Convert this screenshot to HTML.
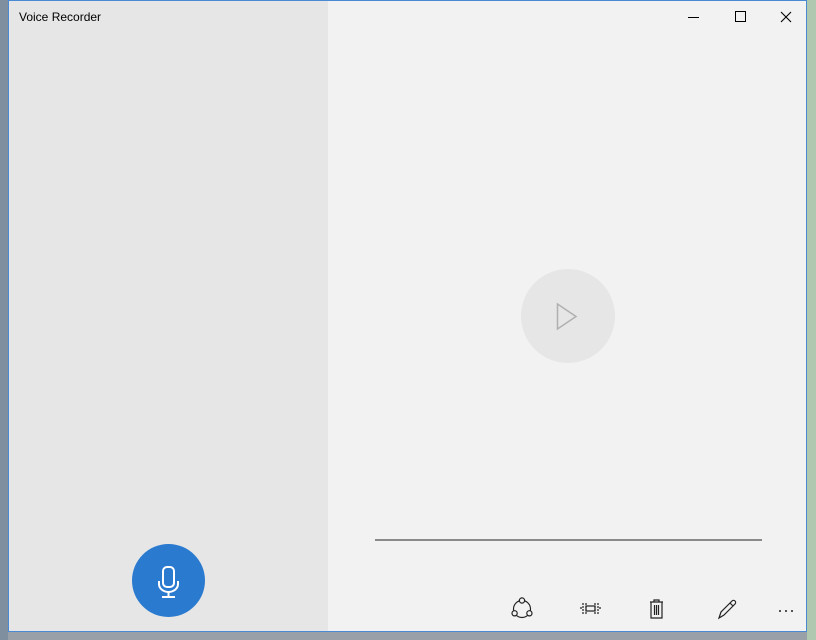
<!DOCTYPE html>
<html><head><meta charset="utf-8"><style>
html,body{margin:0;padding:0;width:816px;height:640px;overflow:hidden;background:#9aa0a8;font-family:"Liberation Sans",sans-serif}
.win{position:absolute;left:8px;top:0;width:799px;height:632px;background:#f2f2f2;border:1px solid #4a8ad4;box-sizing:border-box}
.left{position:absolute;left:0;top:0;width:319px;height:100%;background:#e6e6e6}
.title{position:absolute;left:10px;top:9px;font-size:12px;color:#000}
.ctl{position:absolute;top:0;height:32px}
.play{position:absolute;left:512px;top:268px;width:94px;height:94px;border-radius:50%;background:#e6e6e6}
.line{position:absolute;left:366px;top:538px;width:387px;height:2px;background:#8a8a8a}
.mic{position:absolute;left:123px;top:543px;width:73px;height:73px;border-radius:50%;background:#2a7ad0}
</style></head><body>
<div style="position:absolute;left:0;top:0;width:8px;height:640px;background:#7f8fa0"></div>
<div style="position:absolute;left:807px;top:0;width:9px;height:640px;background:#b0c8b0"></div>
<div class="win">
<div class="left"></div>
<div class="title">Voice Recorder</div>
<svg class="ctl" style="left:660px" width="140" height="32">
<line x1="19" y1="16.5" x2="30" y2="16.5" stroke="#000" stroke-width="1"/>
<rect x="66.5" y="10.5" width="10" height="10" fill="none" stroke="#000"/>
<path d="M112 11 L122 21 M122 11 L112 21" stroke="#000" stroke-width="1.1"/>
</svg>
<div class="play"><svg width="94" height="94"><path d="M36.5 35 L36.5 60 L55 47.5 Z" fill="none" stroke="#b0b0b0" stroke-width="1.5"/></svg></div>
<div class="line"></div>
<div class="mic"><svg width="73" height="73">
<rect x="31" y="23" width="11" height="20" rx="4" fill="none" stroke="#fff" stroke-width="2"/>
<path d="M27 37 v3 a9.5 8 0 0 0 19 0 v-3" fill="none" stroke="#fff" stroke-width="2"/>
<path d="M36.5 48 v4 M30 53 h13" stroke="#fff" stroke-width="2"/>
</svg></div>
<svg style="position:absolute;left:490px;top:590px" width="310" height="36">
<g fill="none" stroke="#222" stroke-width="1.2">
<circle cx="23" cy="18" r="8.5"/>
<g fill="#f2f2f2"><circle cx="23" cy="9.5" r="2.6"/><circle cx="15.6" cy="22.3" r="2.6"/><circle cx="30.4" cy="22.3" r="2.6"/></g>
<path d="M84 12 v12 M87 12 v12 M96 12 v12 M99 12 v12" stroke-dasharray="2 1"/>
<rect x="87" y="15" width="9" height="5"/>
<path d="M81 17 h2 M100 17 h2"/>
<path d="M151 11 h13 M155 11 v-2 h5 v2 M152 11 v16 h11 v-16 M155.5 14 v10 M157.5 14 v10 M159.5 14 v10"/>
<path d="M220 27 l2 -6 l11 -11 a2 2 0 0 1 3 3 l-11 11 z M231 12 l3 3"/>
</g>
<g fill="#222"><circle cx="281" cy="20" r="1"/><circle cx="287" cy="20" r="1"/><circle cx="293" cy="20" r="1"/></g>
</svg>
</div>
</body></html>
